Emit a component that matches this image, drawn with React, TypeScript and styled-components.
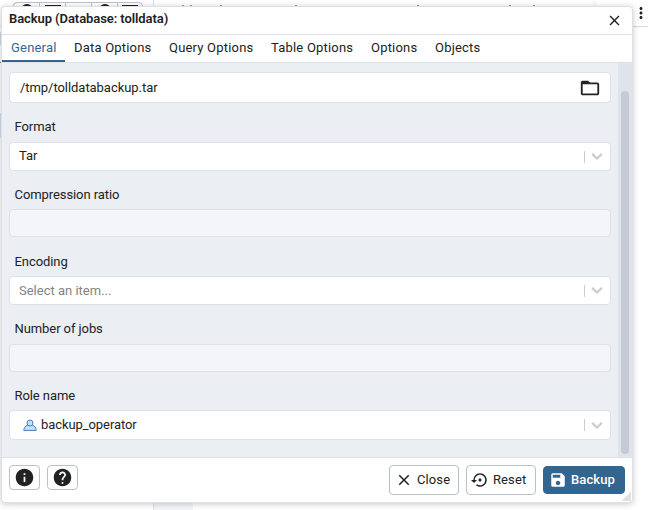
import React from 'react';
import styled, { createGlobalStyle } from 'styled-components';
import {
  MdClose,
  MdFolderOpen,
  MdHelp,
  MdInfo,
  MdMoreVert,
  MdSave,
  MdSettingsBackupRestore,
} from 'react-icons/md';

const GlobalStyle = createGlobalStyle`
  * { box-sizing: border-box; }
  html, body { margin: 0; padding: 0; overflow: hidden; background: #fff; }
  body { font-family: Roboto, "Liberation Sans", sans-serif; font-size: 13px; color: #222; }
  svg { flex: none; }
`;

const Page = styled.div`
  position: relative;
  width: 648px;
  height: 510px;
  overflow: hidden;
  background: #fff;
`;

const Workspace = styled.div`
  display: flex;
  height: 510px;
`;

const ObjectTree = styled.div`
  flex: none;
  width: 154px;
  border-right: 1px solid #dde0e6;
  overflow: hidden;
`;

const TreeToolbar = styled.div`
  display: flex;
  height: 27px;
  padding: 2px 0 0 13px;
  border-bottom: 1px solid #dde0e6;
`;

const ToolButton = styled.div`
  display: flex;
  justify-content: center;
  width: 26px;
  height: 22px;
  padding-top: 1px;
  border: 1px solid #bac1cd;
  border-right-width: 0;
  &:first-child { border-radius: 4px 0 0 4px; }
  &:last-child { border-right-width: 1px; border-radius: 0 4px 4px 0; }
`;

const TreeRow = styled.div<{ $top: number; $height: number; $color: string }>`
  height: ${(p) => p.$height}px;
  margin-top: ${(p) => p.$top}px;
  background: ${(p) => p.$color};
`;

const MainPane = styled.div`
  display: flex;
  flex-direction: column;
  flex: 1;
`;

const TabStrip = styled.div`
  display: flex;
  justify-content: flex-end;
  height: 27px;
  border-bottom: 1px solid #dde0e6;
`;

const StripEnd = styled.div`
  display: flex;
  justify-content: flex-end;
  width: 52px;
  padding: 4px 0 0;
  box-shadow: -2px 0 4px rgba(0, 0, 0, 0.06);
  svg { margin-right: -2px; }
`;

const StripLabels = styled.div`
  display: flex;
  flex: 1;
  padding: 5px 0 0 66px;
`;

const LabelTop = styled.i<{ $gap: number }>`
  width: 2px;
  height: 2px;
  margin-left: ${(p) => p.$gap}px;
  background: #999;
`;

const PaneBody = styled.div`
  flex: 1;
  display: flex;
  align-items: flex-end;
`;

const Gutter = styled.div`
  width: 39px;
  height: 40px;
  background: #f3f5f9;
`;

const Dialog = styled.div`
  position: absolute;
  left: 1px;
  top: 6px;
  width: 632px;
  height: 497px;
  display: flex;
  flex-direction: column;
  background: #fff;
  border: 1px solid #dde0e6;
  border-radius: 4px;
  box-shadow: 0 1px 6px rgba(0, 0, 0, 0.22);
  overflow: hidden;
`;

const Header = styled.div`
  flex: none;
  display: flex;
  align-items: center;
  justify-content: space-between;
  height: 28px;
  padding: 0 9px 0 7px;
  border-bottom: 1px solid #dde0e6;
`;

const Title = styled.div`
  font-size: 13px;
  font-weight: 600;
  line-height: 20px;
  margin-top: -3px;
  letter-spacing: -0.08px;
`;

const Tabs = styled.div`
  flex: none;
  display: flex;
  height: 28px;
  border-bottom: 1px solid #dde0e6;
`;

const Tab = styled.div<{ $width: number; $active?: boolean }>`
  width: ${(p) => p.$width}px;
  height: 27px;
  padding-left: 9px;
  line-height: 25px;
  font-size: 13px;
  letter-spacing: 0.2px;
  white-space: nowrap;
  color: ${(p) => (p.$active ? '#326690' : '#222')};
  border-bottom: 2px solid ${(p) => (p.$active ? '#326690' : 'transparent')};
`;

const Content = styled.div`
  flex: 1;
  min-height: 0;
  display: flex;
  background: #ebeef3;
`;

const Form = styled.div`
  flex: 1;
  padding: 9px 7px 0;
`;

const Label = styled.div<{ $before: number; $after: number }>`
  height: 20px;
  line-height: 20px;
  padding-left: 6px;
  margin: ${(p) => p.$before}px 0 ${(p) => p.$after}px -0.5px;
  letter-spacing: -0.08px;
`;

const Field = styled.div<{ $height: number; $disabled?: boolean }>`
  display: flex;
  align-items: center;
  width: 602px;
  height: ${(p) => p.$height}px;
  padding: 0 4px 0 9px;
  border: 1px solid #dde0e6;
  border-radius: 4px;
  background: ${(p) => (p.$disabled ? '#f3f5f9' : '#fff')};
`;

const FieldAction = styled.span`
  display: flex;
  padding-right: 5px;
`;

const Value = styled.span<{ $muted?: boolean; $spacing?: number; $lift?: number; $indent?: number }>`
  flex: 1;
  line-height: 18px;
  padding-left: ${(p) => p.$indent ?? 0}px;
  padding-bottom: ${(p) => p.$lift ?? 0}px;
  letter-spacing: ${(p) => p.$spacing ?? 0}px;
  color: ${(p) => (p.$muted ? '#848484' : '#222')};
`;

const SelectEnd = styled.span`
  display: flex;
  align-items: center;
  gap: 3px;
  &::before { content: ''; width: 1px; height: 12px; background: #ccc; }
  svg { margin-top: -1px; }
`;

const RoleOption = styled.span`
  display: flex;
  align-items: center;
  gap: 4px;
`;

const ScrollTrack = styled.div`
  width: 14px;
  padding: 28px 3px 3px;
  background: #dfe3eb;
`;

const ScrollThumb = styled.div`
  height: 363px;
  border-radius: 4px;
  background: #c5cad5;
`;

const Footer = styled.div`
  flex: none;
  position: relative;
  display: flex;
  height: 45px;
  padding: 7px 7px 0;
  border-top: 1px solid #dde0e6;
`;

const IconButton = styled.button`
  display: flex;
  align-items: center;
  justify-content: center;
  width: 31px;
  height: 25px;
  margin: 0 7px 0 0;
  padding: 0;
  color: #222;
  background: #fff;
  border: 1px solid #bac1cd;
  border-radius: 4px;
`;

const Spacer = styled.div`
  flex: 1;
`;

const Button = styled.button<{ $width: number; $primary?: boolean; $pad: number }>`
  display: flex;
  align-items: center;
  width: ${(p) => p.$width}px;
  height: ${(p) => (p.$primary ? 28 : 30)}px;
  margin: ${(p) => (p.$primary ? '1px 0 0 7px' : '0 0 0 7px')};
  padding: 0 0 1px ${(p) => p.$pad}px;
  gap: 4px;
  white-space: nowrap;
  font-family: inherit;
  font-size: 13px;
  font-weight: ${(p) => (p.$primary ? 500 : 400)};
  letter-spacing: 0.1px;
  color: ${(p) => (p.$primary ? '#fff' : '#222')};
  background: ${(p) => (p.$primary ? '#326690' : '#fff')};
  border: 1px solid ${(p) => (p.$primary ? '#326690' : '#bac1cd')};
  border-radius: 4px;
`;

const ResizeGrip = styled.div`
  position: absolute;
  right: 1px;
  bottom: 1px;
  width: 9px;
  height: 9px;
  background: linear-gradient(135deg, transparent 50%, #e0e0e0 50%);
`;

const Chevron = () => (
  <svg width="18" height="18" viewBox="0 0 20 20" fill="#ccc">
    <path d="M4.516 7.548c0.436-0.446 1.043-0.481 1.576 0l3.908 3.747 3.908-3.747c0.533-0.481 1.141-0.446 1.574 0 0.436 0.445 0.408 1.197 0 1.615-0.406 0.418-4.695 4.502-4.695 4.502-0.217 0.223-0.502 0.335-0.787 0.335s-0.57-0.112-0.789-0.335c0 0-4.287-4.084-4.695-4.502s-0.436-1.17 0-1.615z" stroke="#ccc" strokeWidth="0.4" />
  </svg>
);

const RoleIcon = () => (
  <svg width="14" height="12" viewBox="0 0 14 12" fill="#c0e2fb" stroke="#4a7fc0" strokeWidth="1">
    <path d="M.8 11.400c0-1.800.7-2.900 2.200-4.400l1.500-.9h5l1.500.9c1.500 1.500 2.200 2.600 2.200 4.400z" />
    <circle cx="7" cy="4" r="3" />
  </svg>
);

const ToolGlyph = ({ round }: { round?: boolean }) => (
  <svg width="16" height="16" viewBox="0 0 16 16" fill="none" stroke="#222" strokeWidth="2">
    {round ? <circle cx="8" cy="6" r="5" /> : <path d="M0 2h16v12H0z" />}
  </svg>
);

const tabs = [
  { label: 'General', width: 63 },
  { label: 'Data Options', width: 95 },
  { label: 'Query Options', width: 102 },
  { label: 'Table Options', width: 100 },
  { label: 'Options', width: 64 },
  { label: 'Objects', width: 64 },
];

export default function App() {
  return (
    <>
      <GlobalStyle />
      <Page>
        <Workspace>
          <ObjectTree>
            <TreeToolbar>
              <ToolButton><ToolGlyph round /></ToolButton>
              <ToolButton><ToolGlyph /></ToolButton>
              <ToolButton />
              <ToolButton><ToolGlyph round /></ToolButton>
              <ToolButton><ToolGlyph /></ToolButton>
            </TreeToolbar>
            <TreeRow $top={5} $height={13} $color="#d5d8e4" />
            <TreeRow $top={17} $height={1} $color="#777" />
            <TreeRow $top={50} $height={25} $color="#d3e3f1" />
          </ObjectTree>
          <MainPane>
            <TabStrip>
              <StripLabels>
                <LabelTop $gap={-38} />
                <LabelTop $gap={6} />
                <LabelTop $gap={28} />
                <LabelTop $gap={73} />
                <LabelTop $gap={120} />
                <LabelTop $gap={90} />
                <LabelTop $gap={22} />
              </StripLabels>
              <StripEnd><MdMoreVert size={18} /></StripEnd>
            </TabStrip>
            <PaneBody><Gutter /></PaneBody>
          </MainPane>
        </Workspace>

        <Dialog>
          <Header>
            <Title>Backup (Database: tolldata)</Title>
            <MdClose size={17} />
          </Header>
          <Tabs>
            {tabs.map((tab, i) => (
              <Tab key={tab.label} $width={tab.width} $active={i === 0}>{tab.label}</Tab>
            ))}
          </Tabs>
          <Content>
            <Form>
              <Field $height={31}>
                <Value $spacing={-0.05} $indent={1}>/tmp/tolldatabackup.tar</Value>
                <FieldAction><MdFolderOpen size={22} /></FieldAction>
              </Field>
              <Label $before={14} $after={5}>Format</Label>
              <Field $height={29}>
                <Value $lift={1}>Tar</Value>
                <SelectEnd><Chevron /></SelectEnd>
              </Field>
              <Label $before={14} $after={4}>Compression ratio</Label>
              <Field $height={28} $disabled />
              <Label $before={15} $after={4}>Encoding</Label>
              <Field $height={29}>
                <Value $muted>Select an item...</Value>
                <SelectEnd><Chevron /></SelectEnd>
              </Field>
              <Label $before={14} $after={5}>Number of jobs</Label>
              <Field $height={28} $disabled />
              <Label $before={14} $after={4}>Role name</Label>
              <Field $height={30}>
                <Value $indent={4} $spacing={-0.08} $lift={1}>
                  <RoleOption><RoleIcon />backup_operator</RoleOption>
                </Value>
                <SelectEnd><Chevron /></SelectEnd>
              </Field>
            </Form>
            <ScrollTrack><ScrollThumb /></ScrollTrack>
          </Content>
          <Footer>
            <IconButton aria-label="Info"><MdInfo size={21} /></IconButton>
            <IconButton aria-label="Help"><MdHelp size={21} /></IconButton>
            <Spacer />
            <Button $width={70} $pad={5}><MdClose size={18} />Close</Button>
            <Button $width={70} $pad={4}><MdSettingsBackupRestore size={18} />Reset</Button>
            <Button $width={82} $pad={5} $primary><MdSave size={18} />Backup</Button>
            <ResizeGrip />
          </Footer>
        </Dialog>
      </Page>
    </>
  );
}
